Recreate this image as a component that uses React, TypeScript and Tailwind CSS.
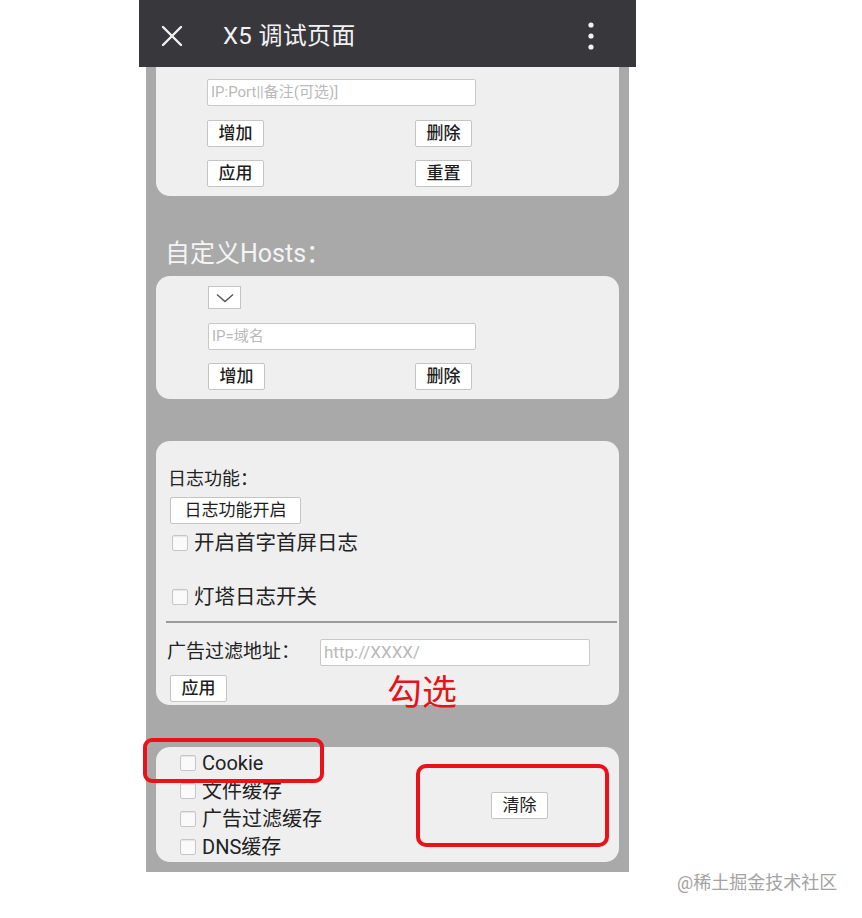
import React from 'react';

const font = "font-['Roboto','Noto_Sans_CJK_SC',sans-serif]";

function Btn({ children, className = '' }: { children: React.ReactNode; className?: string }) {
  return (
    <button
      className={`h-[27px] bg-white border-[1.5px] border-[#c4c4c4] rounded-[2px] text-[17px] leading-none text-[#1e1e1e] font-medium flex items-center justify-center ${className}`}
    >
      {children}
    </button>
  );
}

function TextInput({ placeholder, className = '' }: { placeholder: string; className?: string }) {
  return (
    <div
      className={`h-[27px] bg-white border-[1.5px] border-[#c8c8c8] rounded-[2px] flex items-center pl-[3px] text-[15px] text-[#b9b9b9] ${className}`}
    >
      {placeholder}
    </div>
  );
}

function Check({ label, className = '' }: { label: string; className?: string }) {
  return (
    <div className={`flex items-center ${className}`}>
      <span className="w-[16px] h-[16px] bg-[#fafafa] border border-[#c6c6c6] rounded-[2px] shadow-[inset_0_1px_1px_rgba(0,0,0,0.08)]" />
      <span className="ml-[6px]">{label}</span>
    </div>
  );
}

export default function App() {
  return (
    <div className={`relative w-[862px] h-[918px] bg-white overflow-hidden ${font}`}>
      <div className="ml-[139px] w-[497px]">
        {/* шапка */}
        <div className="h-[67px] bg-[#38373c] flex items-center pt-[5px]">
          <svg className="ml-[22px]" width="22" height="22" viewBox="0 0 22 22">
            <path d="M2 2 L20 20 M20 2 L2 20" stroke="#f2f2f2" strokeWidth="2.4" strokeLinecap="round" />
          </svg>
          <span className="ml-[40px] text-[24px] text-[#f2f2f2] tracking-[0.3px]">X5 调试页面</span>
          <svg className="ml-auto mr-[42px]" width="6" height="28" viewBox="0 0 6 28">
            <circle cx="3" cy="3" r="2.6" fill="#f2f2f2" />
            <circle cx="3" cy="14" r="2.6" fill="#f2f2f2" />
            <circle cx="3" cy="25" r="2.6" fill="#f2f2f2" />
          </svg>
        </div>

        {/* серая область */}
        <div className="mx-[7px] bg-[#a9a9a9] px-[10px] pb-[10px] text-[#222]">
          {/* прокси */}
          <div className="h-[129px] bg-[#efefef] rounded-b-[14px] pl-[51px] pt-[12px]">
            <TextInput placeholder="IP:Port||备注(可选)]" className="w-[269px]" />
            <div className="flex mt-[14px]">
              <Btn className="w-[57px]">增加</Btn>
              <Btn className="w-[57px] ml-[151px]">删除</Btn>
            </div>
            <div className="flex mt-[13px]">
              <Btn className="w-[57px]">应用</Btn>
              <Btn className="w-[57px] ml-[151px]">重置</Btn>
            </div>
          </div>

          {/* Hosts */}
          <div className="pt-[42px] pb-[6px] pl-[9px] text-[25px] leading-[32px] text-[#f4f4f4]">自定义Hosts：</div>
          <div className="h-[123px] bg-[#efefef] rounded-[14px] pl-[52px] pt-[10px]">
            <div className="w-[33px] h-[23px] bg-white border-[1.5px] border-[#c4c4c4] flex items-center justify-center">
              <svg width="20" height="10" viewBox="0 0 20 10">
                <path d="M2 1.5 L10 8.5 L18 1.5" fill="none" stroke="#555" strokeWidth="1.4" />
              </svg>
            </div>
            <TextInput placeholder="IP=域名" className="w-[268px] mt-[14px]" />
            <div className="flex mt-[13px]">
              <Btn className="w-[57px]">增加</Btn>
              <Btn className="w-[57px] ml-[150px]">删除</Btn>
            </div>
          </div>

          {/* логи */}
          <div className="mt-[42px] h-[264px] bg-[#efefef] rounded-[14px] pt-[26px]">
            <div className="pl-[12px] text-[18px] leading-[24px]">日志功能：</div>
            <Btn className="ml-[14px] mt-[6px] w-[131px] font-normal">日志功能开启</Btn>
            <Check label="开启首字首屏日志" className="ml-[16px] mt-[7px] h-[24px] text-[20.5px]" />
            <Check label="灯塔日志开关" className="ml-[16px] mt-[30px] h-[24px] text-[20.5px]" />
            <div className="mt-[12px] ml-[10px] mr-[2px] h-[2px] bg-[#9a9a9a]" />
            <div className="flex items-center mt-[15px] pl-[11px]">
              <span className="w-[153px] text-[19px]">广告过滤地址：</span>
              <TextInput placeholder="http://XXXX/" className="w-[270px] text-[17px]" />
            </div>
            <Btn className="ml-[14px] mt-[8px] w-[57px]">应用</Btn>
          </div>

          {/* кэш */}
          <div className="mt-[42px] h-[115px] bg-[#efefef] rounded-[14px] pt-[1px] flex items-center">
            <div className="pl-[24px] text-[20px] leading-[28px]">
              <Check label="Cookie" className="h-[28px]" />
              <Check label="文件缓存" className="h-[28px]" />
              <Check label="广告过滤缓存" className="h-[28px]" />
              <Check label="DNS缓存" className="h-[28px]" />
            </div>
            <Btn className="ml-auto mr-[71px] w-[57px] font-normal">清除</Btn>
          </div>
        </div>
      </div>

      {/* водяной знак */}
      <div className="absolute left-[677px] top-[871px] text-[18px] leading-[24px] text-[#a3a3a3]">@稀土掘金技术社区</div>

      {/* красные пометки */}
      <div className="absolute left-[387px] top-[672px] text-[35px] leading-[44px] text-[#e5131b]">勾选</div>
      <div className="absolute left-[143px] top-[738px] w-[181px] h-[45px] border-[4px] border-[#ec1018] rounded-[9px]" />
      <div className="absolute left-[416px] top-[764px] w-[193px] h-[83px] border-[4px] border-[#ec1018] rounded-[10px]" />
    </div>
  );
}
